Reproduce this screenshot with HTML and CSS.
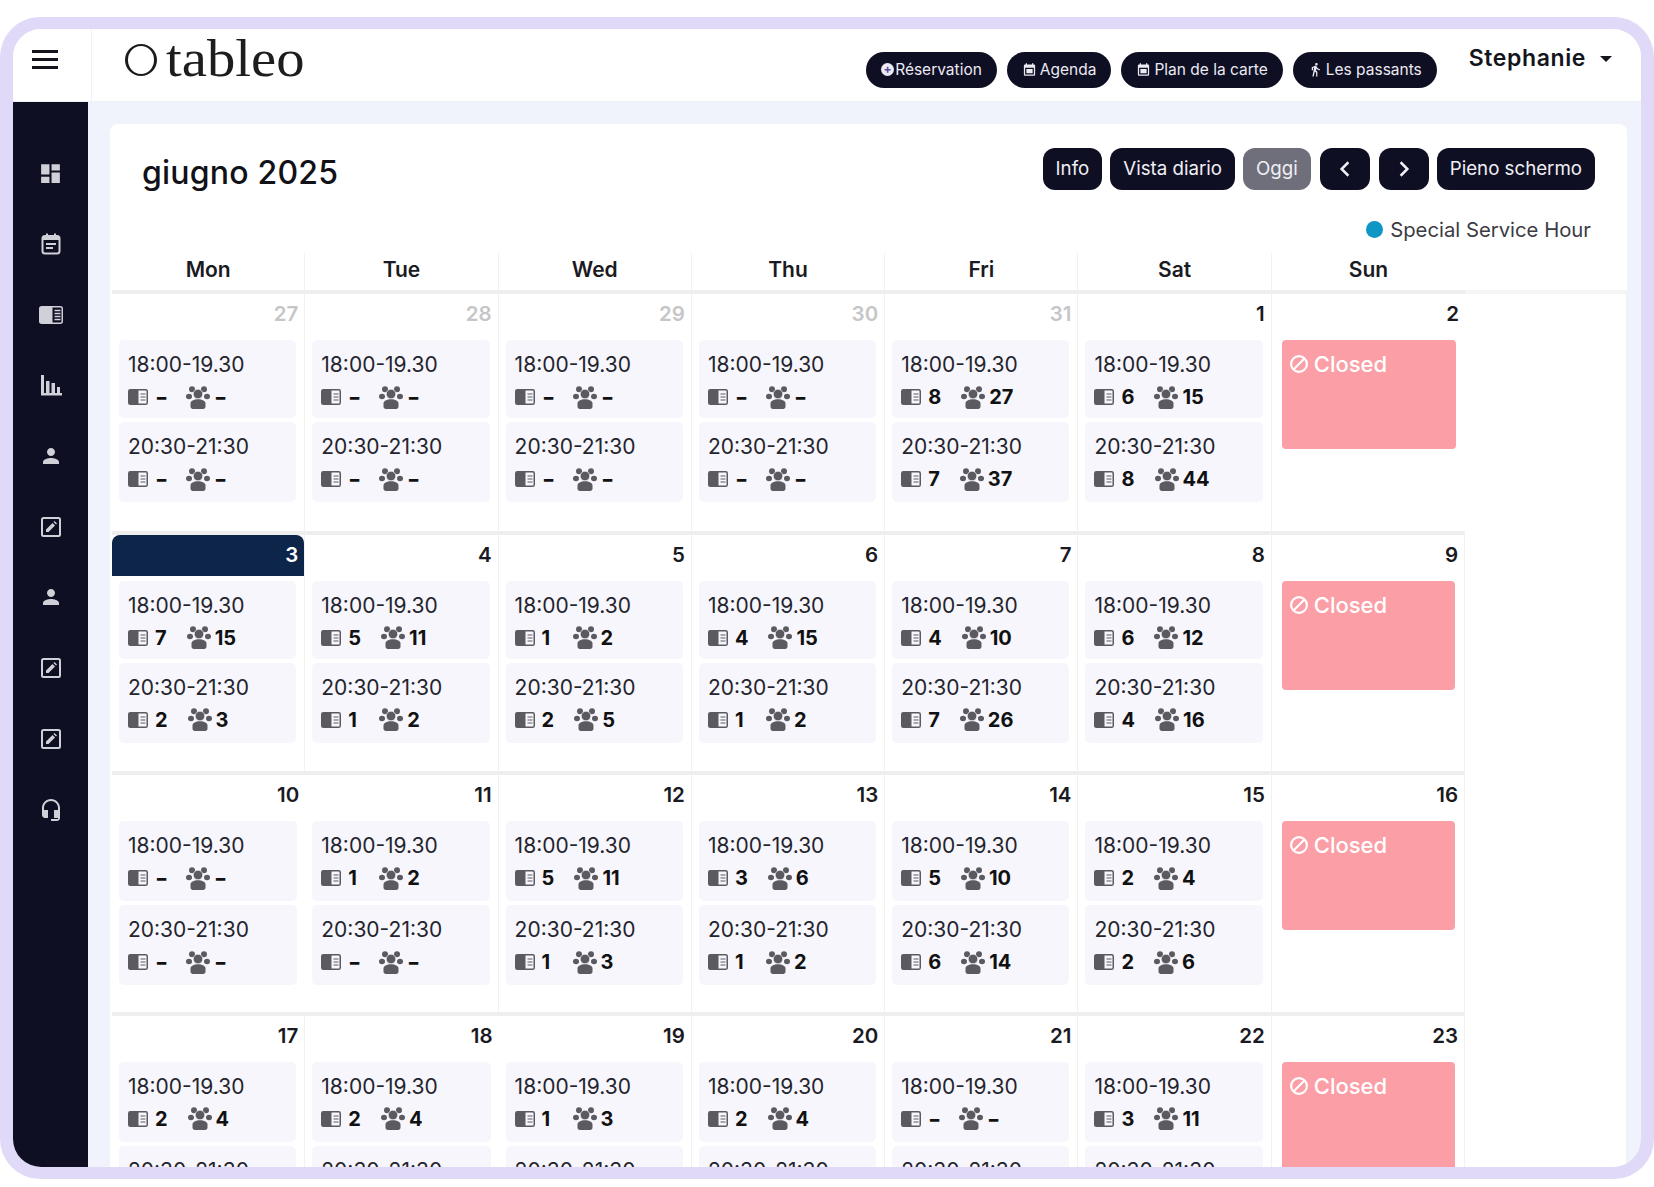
FILE: index.html
```html
<!DOCTYPE html>
<html lang="it">
<head>
<meta charset="utf-8">
<title>tableo</title>
<link rel="stylesheet" href="styles.css">
</head>
<body>
<svg class="defs" xmlns="http://www.w3.org/2000/svg">
  <symbol id="i-book" viewBox="0 0 20 16"><rect x=".75" y=".75" width="18.5" height="14.5" rx="1.6" fill="none" stroke="currentColor" stroke-width="1.5"/><path d="M1 1h9.5v14H1z" fill="currentColor"/><path d="M12.5 5h5M12.5 8h5M12.5 11h5" stroke="currentColor" stroke-width="1.2" fill="none"/></symbol>
  <symbol id="i-group" viewBox="0 0 24 23"><circle cx="6" cy="3.300" r="3" fill="currentColor"/><circle cx="18" cy="3.300" r="3" fill="currentColor"/><ellipse cx="3" cy="10.500" rx="3" ry="2.800" fill="currentColor"/><ellipse cx="21" cy="10.500" rx="3" ry="2.800" fill="currentColor"/><circle cx="12" cy="8" r="4.800" fill="currentColor" stroke="#f6f6fc" stroke-width=".7"/><path d="M4.500 20.500v-3c0-2.600 3.300-4.200 7.500-4.200s7.500 1.600 7.500 4.200v3c0 1.400-1 2.500-2.400 2.500H6.900c-1.400 0-2.400-1.100-2.400-2.500z" fill="currentColor"/></symbol>
  <symbol id="i-dash" viewBox="0 0 24 24"><path d="M3 13h8V3H3v10zm0 8h8v-6H3v6zm10 0h8V11h-8v10zm0-18v6h8V3h-8z" fill="currentColor"/></symbol>
  <symbol id="i-cal" viewBox="0 0 24 24"><rect x="3.500" y="4" width="17" height="17.500" rx="2.500" fill="none" stroke="currentColor" stroke-width="2"/><path d="M4 4h16v4H4zM7 1.500h2V5H7zM15 1.500h2V5h-2zM7 11h10v2H7zM7 15h7v2H7z" fill="currentColor"/></symbol>
  <symbol id="i-menu" viewBox="0 0 24 18"><rect x=".75" y=".75" width="22.500" height="16.500" rx="2" fill="none" stroke="currentColor" stroke-width="1.500"/><path d="M1 1h12.500v16H1z" fill="currentColor"/><path d="M15.500 4.500h6M15.500 7.500h6M15.500 10.500h6M15.500 13.500h6" stroke="currentColor" stroke-width="1.500" fill="none"/></symbol>
  <symbol id="i-bars" viewBox="0 0 24 24"><path d="M2 2h3v18h2V8h3.500v12h2V10h3.500v10h2v-6H21v6h2v2.500H2z" fill="currentColor"/></symbol>
  <symbol id="i-person" viewBox="0 0 24 24"><path d="M12 12c2.210 0 4-1.790 4-4s-1.790-4-4-4-4 1.790-4 4 1.790 4 4 4zm0 2c-2.670 0-8 1.340-8 4v2h16v-2c0-2.660-5.330-4-8-4z" fill="currentColor"/></symbol>
  <symbol id="i-edit" viewBox="0 0 24 24"><rect x="3" y="3" width="18" height="18" rx="1.500" fill="none" stroke="currentColor" stroke-width="2"/><path d="M7 17v-2.500l6.500-6.500 2.500 2.500L9.500 17zM14.500 7l1-1 2.500 2.500-1 1z" fill="currentColor"/></symbol>
  <symbol id="i-head" viewBox="0 0 24 24"><path d="M12 1c-4.970 0-9 4.030-9 9v7c0 1.660 1.340 3 3 3h3v-8H5v-2c0-3.870 3.130-7 7-7s7 3.130 7 7v2h-4v8h4v1h-7v2h6c1.660 0 3-1.340 3-3V10c0-4.970-4.030-9-9-9z" fill="currentColor"/></symbol>
  <symbol id="i-walk" viewBox="0 0 24 24"><path d="M13.500 5.500c1.100 0 2-.9 2-2s-.9-2-2-2-2 .9-2 2 .9 2 2 2zM9.800 8.900L7 23h2.100l1.800-8 2.100 2v6h2v-7.500l-2.100-2 .6-3C14.800 12 16.800 13 19 13v-2c-1.900 0-3.500-1-4.300-2.400l-1-1.600c-.4-.6-1-1-1.700-1-.3 0-.5.1-.8.1L6 8.300V13h2V9.600l1.800-.7" fill="currentColor"/></symbol>
  <symbol id="i-navcal" viewBox="0 0 24 24"><path d="M19 4h-1V2h-2v2H8V2H6v2H5c-1.100 0-2 .9-2 2v14c0 1.100.9 2 2 2h14c1.100 0 2-.9 2-2V6c0-1.100-.9-2-2-2zm0 16H5V9h14v11zM7 11h10v7H7z" fill="currentColor"/></symbol>
  <symbol id="i-ban" viewBox="0 0 24 24"><circle cx="12" cy="12" r="9.500" fill="none" stroke="currentColor" stroke-width="2.600"/><path d="M6 18L18 6" stroke="currentColor" stroke-width="2.600"/></symbol>
</svg>

<div class="frame">
<div class="screen">
  <header class="topbar">
    <div class="burger-cell"><span class="burger"><i></i><i></i><i></i></span></div>
    <div class="logo"><span class="logo-ring"></span><span class="logo-text">tableo</span></div>
    <nav class="nav">
      <a class="pill pill-res"><span class="plus">+</span>Réservation</a>
      <a class="pill"><svg class="pill-icon"><use href="#i-navcal"/></svg>Agenda</a>
      <a class="pill"><svg class="pill-icon"><use href="#i-navcal"/></svg>Plan de la carte</a>
      <a class="pill"><svg class="pill-icon"><use href="#i-walk"/></svg>Les passants</a>
    </nav>
    <div class="user">Stephanie<span class="caret"></span></div>
  </header>

  <div class="body">
    <aside class="sidebar">
      <span class="side-item"><svg class="side-icon dash"><use href="#i-dash"/></svg></span>
      <span class="side-item"><svg class="side-icon"><use href="#i-cal"/></svg></span>
      <span class="side-item"><svg class="side-icon menu"><use href="#i-menu"/></svg></span>
      <span class="side-item"><svg class="side-icon"><use href="#i-bars"/></svg></span>
      <span class="side-item"><svg class="side-icon"><use href="#i-person"/></svg></span>
      <span class="side-item"><svg class="side-icon"><use href="#i-edit"/></svg></span>
      <span class="side-item"><svg class="side-icon"><use href="#i-person"/></svg></span>
      <span class="side-item"><svg class="side-icon"><use href="#i-edit"/></svg></span>
      <span class="side-item"><svg class="side-icon"><use href="#i-edit"/></svg></span>
      <span class="side-item"><svg class="side-icon"><use href="#i-head"/></svg></span>
    </aside>

    <main class="main">
      <section class="card">
        <div class="toolbar">
          <h1 class="title">giugno 2025</h1>
          <div class="tools">
            <button class="btn">Info</button>
            <button class="btn">Vista diario</button>
            <button class="btn btn-muted">Oggi</button>
            <button class="btn btn-arrow"><svg class="chev" viewBox="0 0 12 16"><path d="M9 2L3 8l6 6" fill="none" stroke="currentColor" stroke-width="2.200"/></svg></button>
            <button class="btn btn-arrow"><svg class="chev" viewBox="0 0 12 16"><path d="M3 2l6 6-6 6" fill="none" stroke="currentColor" stroke-width="2.200"/></svg></button>
            <button class="btn">Pieno schermo</button>
          </div>
        </div>
        <div class="legend"><span class="dot"></span>Special Service Hour</div>

        <div class="week-head">
          <div class="wd">Mon</div><div class="wd">Tue</div><div class="wd">Wed</div><div class="wd">Thu</div><div class="wd">Fri</div><div class="wd">Sat</div><div class="wd">Sun</div>
        </div>

        <div class="grid">
          <div class="filler"></div>

          <div class="cell"><div class="num muted">27</div><div class="slot"><div class="time">18:00-19.30</div><div class="stats"><svg class="s-book"><use href="#i-book"/></svg><b class="nil">-</b><svg class="s-group"><use href="#i-group"/></svg><b class="nil">-</b></div></div><div class="slot"><div class="time">20:30-21:30</div><div class="stats"><svg class="s-book"><use href="#i-book"/></svg><b class="nil">-</b><svg class="s-group"><use href="#i-group"/></svg><b class="nil">-</b></div></div></div>
          <div class="cell"><div class="num muted">28</div><div class="slot"><div class="time">18:00-19.30</div><div class="stats"><svg class="s-book"><use href="#i-book"/></svg><b class="nil">-</b><svg class="s-group"><use href="#i-group"/></svg><b class="nil">-</b></div></div><div class="slot"><div class="time">20:30-21:30</div><div class="stats"><svg class="s-book"><use href="#i-book"/></svg><b class="nil">-</b><svg class="s-group"><use href="#i-group"/></svg><b class="nil">-</b></div></div></div>
          <div class="cell"><div class="num muted">29</div><div class="slot"><div class="time">18:00-19.30</div><div class="stats"><svg class="s-book"><use href="#i-book"/></svg><b class="nil">-</b><svg class="s-group"><use href="#i-group"/></svg><b class="nil">-</b></div></div><div class="slot"><div class="time">20:30-21:30</div><div class="stats"><svg class="s-book"><use href="#i-book"/></svg><b class="nil">-</b><svg class="s-group"><use href="#i-group"/></svg><b class="nil">-</b></div></div></div>
          <div class="cell"><div class="num muted">30</div><div class="slot"><div class="time">18:00-19.30</div><div class="stats"><svg class="s-book"><use href="#i-book"/></svg><b class="nil">-</b><svg class="s-group"><use href="#i-group"/></svg><b class="nil">-</b></div></div><div class="slot"><div class="time">20:30-21:30</div><div class="stats"><svg class="s-book"><use href="#i-book"/></svg><b class="nil">-</b><svg class="s-group"><use href="#i-group"/></svg><b class="nil">-</b></div></div></div>
          <div class="cell"><div class="num muted">31</div><div class="slot"><div class="time">18:00-19.30</div><div class="stats"><svg class="s-book"><use href="#i-book"/></svg><b>8</b><svg class="s-group"><use href="#i-group"/></svg><b>27</b></div></div><div class="slot"><div class="time">20:30-21:30</div><div class="stats"><svg class="s-book"><use href="#i-book"/></svg><b>7</b><svg class="s-group"><use href="#i-group"/></svg><b>37</b></div></div></div>
          <div class="cell"><div class="num">1</div><div class="slot"><div class="time">18:00-19.30</div><div class="stats"><svg class="s-book"><use href="#i-book"/></svg><b>6</b><svg class="s-group"><use href="#i-group"/></svg><b>15</b></div></div><div class="slot"><div class="time">20:30-21:30</div><div class="stats"><svg class="s-book"><use href="#i-book"/></svg><b>8</b><svg class="s-group"><use href="#i-group"/></svg><b>44</b></div></div></div>
          <div class="cell"><div class="num">2</div><div class="closed"><svg class="ban"><use href="#i-ban"/></svg>Closed</div></div>

          <div class="cell"><div class="num today">3</div><div class="slot"><div class="time">18:00-19.30</div><div class="stats"><svg class="s-book"><use href="#i-book"/></svg><b>7</b><svg class="s-group"><use href="#i-group"/></svg><b>15</b></div></div><div class="slot"><div class="time">20:30-21:30</div><div class="stats"><svg class="s-book"><use href="#i-book"/></svg><b>2</b><svg class="s-group"><use href="#i-group"/></svg><b>3</b></div></div></div>
          <div class="cell"><div class="num">4</div><div class="slot"><div class="time">18:00-19.30</div><div class="stats"><svg class="s-book"><use href="#i-book"/></svg><b>5</b><svg class="s-group"><use href="#i-group"/></svg><b>11</b></div></div><div class="slot"><div class="time">20:30-21:30</div><div class="stats"><svg class="s-book"><use href="#i-book"/></svg><b>1</b><svg class="s-group"><use href="#i-group"/></svg><b>2</b></div></div></div>
          <div class="cell"><div class="num">5</div><div class="slot"><div class="time">18:00-19.30</div><div class="stats"><svg class="s-book"><use href="#i-book"/></svg><b>1</b><svg class="s-group"><use href="#i-group"/></svg><b>2</b></div></div><div class="slot"><div class="time">20:30-21:30</div><div class="stats"><svg class="s-book"><use href="#i-book"/></svg><b>2</b><svg class="s-group"><use href="#i-group"/></svg><b>5</b></div></div></div>
          <div class="cell"><div class="num">6</div><div class="slot"><div class="time">18:00-19.30</div><div class="stats"><svg class="s-book"><use href="#i-book"/></svg><b>4</b><svg class="s-group"><use href="#i-group"/></svg><b>15</b></div></div><div class="slot"><div class="time">20:30-21:30</div><div class="stats"><svg class="s-book"><use href="#i-book"/></svg><b>1</b><svg class="s-group"><use href="#i-group"/></svg><b>2</b></div></div></div>
          <div class="cell"><div class="num">7</div><div class="slot"><div class="time">18:00-19.30</div><div class="stats"><svg class="s-book"><use href="#i-book"/></svg><b>4</b><svg class="s-group"><use href="#i-group"/></svg><b>10</b></div></div><div class="slot"><div class="time">20:30-21:30</div><div class="stats"><svg class="s-book"><use href="#i-book"/></svg><b>7</b><svg class="s-group"><use href="#i-group"/></svg><b>26</b></div></div></div>
          <div class="cell"><div class="num">8</div><div class="slot"><div class="time">18:00-19.30</div><div class="stats"><svg class="s-book"><use href="#i-book"/></svg><b>6</b><svg class="s-group"><use href="#i-group"/></svg><b>12</b></div></div><div class="slot"><div class="time">20:30-21:30</div><div class="stats"><svg class="s-book"><use href="#i-book"/></svg><b>4</b><svg class="s-group"><use href="#i-group"/></svg><b>16</b></div></div></div>
          <div class="cell"><div class="num">9</div><div class="closed"><svg class="ban"><use href="#i-ban"/></svg>Closed</div></div>

          <div class="cell"><div class="num">10</div><div class="slot"><div class="time">18:00-19.30</div><div class="stats"><svg class="s-book"><use href="#i-book"/></svg><b class="nil">-</b><svg class="s-group"><use href="#i-group"/></svg><b class="nil">-</b></div></div><div class="slot"><div class="time">20:30-21:30</div><div class="stats"><svg class="s-book"><use href="#i-book"/></svg><b class="nil">-</b><svg class="s-group"><use href="#i-group"/></svg><b class="nil">-</b></div></div></div>
          <div class="cell"><div class="num">11</div><div class="slot"><div class="time">18:00-19.30</div><div class="stats"><svg class="s-book"><use href="#i-book"/></svg><b>1</b><svg class="s-group"><use href="#i-group"/></svg><b>2</b></div></div><div class="slot"><div class="time">20:30-21:30</div><div class="stats"><svg class="s-book"><use href="#i-book"/></svg><b class="nil">-</b><svg class="s-group"><use href="#i-group"/></svg><b class="nil">-</b></div></div></div>
          <div class="cell"><div class="num">12</div><div class="slot"><div class="time">18:00-19.30</div><div class="stats"><svg class="s-book"><use href="#i-book"/></svg><b>5</b><svg class="s-group"><use href="#i-group"/></svg><b>11</b></div></div><div class="slot"><div class="time">20:30-21:30</div><div class="stats"><svg class="s-book"><use href="#i-book"/></svg><b>1</b><svg class="s-group"><use href="#i-group"/></svg><b>3</b></div></div></div>
          <div class="cell"><div class="num">13</div><div class="slot"><div class="time">18:00-19.30</div><div class="stats"><svg class="s-book"><use href="#i-book"/></svg><b>3</b><svg class="s-group"><use href="#i-group"/></svg><b>6</b></div></div><div class="slot"><div class="time">20:30-21:30</div><div class="stats"><svg class="s-book"><use href="#i-book"/></svg><b>1</b><svg class="s-group"><use href="#i-group"/></svg><b>2</b></div></div></div>
          <div class="cell"><div class="num">14</div><div class="slot"><div class="time">18:00-19.30</div><div class="stats"><svg class="s-book"><use href="#i-book"/></svg><b>5</b><svg class="s-group"><use href="#i-group"/></svg><b>10</b></div></div><div class="slot"><div class="time">20:30-21:30</div><div class="stats"><svg class="s-book"><use href="#i-book"/></svg><b>6</b><svg class="s-group"><use href="#i-group"/></svg><b>14</b></div></div></div>
          <div class="cell"><div class="num">15</div><div class="slot"><div class="time">18:00-19.30</div><div class="stats"><svg class="s-book"><use href="#i-book"/></svg><b>2</b><svg class="s-group"><use href="#i-group"/></svg><b>4</b></div></div><div class="slot"><div class="time">20:30-21:30</div><div class="stats"><svg class="s-book"><use href="#i-book"/></svg><b>2</b><svg class="s-group"><use href="#i-group"/></svg><b>6</b></div></div></div>
          <div class="cell"><div class="num">16</div><div class="closed"><svg class="ban"><use href="#i-ban"/></svg>Closed</div></div>

          <div class="cell"><div class="num">17</div><div class="slot"><div class="time">18:00-19.30</div><div class="stats"><svg class="s-book"><use href="#i-book"/></svg><b>2</b><svg class="s-group"><use href="#i-group"/></svg><b>4</b></div></div><div class="slot"><div class="time">20:30-21:30</div><div class="stats"><svg class="s-book"><use href="#i-book"/></svg><b class="nil">-</b><svg class="s-group"><use href="#i-group"/></svg><b class="nil">-</b></div></div></div>
          <div class="cell"><div class="num">18</div><div class="slot"><div class="time">18:00-19.30</div><div class="stats"><svg class="s-book"><use href="#i-book"/></svg><b>2</b><svg class="s-group"><use href="#i-group"/></svg><b>4</b></div></div><div class="slot"><div class="time">20:30-21:30</div><div class="stats"><svg class="s-book"><use href="#i-book"/></svg><b class="nil">-</b><svg class="s-group"><use href="#i-group"/></svg><b class="nil">-</b></div></div></div>
          <div class="cell"><div class="num">19</div><div class="slot"><div class="time">18:00-19.30</div><div class="stats"><svg class="s-book"><use href="#i-book"/></svg><b>1</b><svg class="s-group"><use href="#i-group"/></svg><b>3</b></div></div><div class="slot"><div class="time">20:30-21:30</div><div class="stats"><svg class="s-book"><use href="#i-book"/></svg><b class="nil">-</b><svg class="s-group"><use href="#i-group"/></svg><b class="nil">-</b></div></div></div>
          <div class="cell"><div class="num">20</div><div class="slot"><div class="time">18:00-19.30</div><div class="stats"><svg class="s-book"><use href="#i-book"/></svg><b>2</b><svg class="s-group"><use href="#i-group"/></svg><b>4</b></div></div><div class="slot"><div class="time">20:30-21:30</div><div class="stats"><svg class="s-book"><use href="#i-book"/></svg><b class="nil">-</b><svg class="s-group"><use href="#i-group"/></svg><b class="nil">-</b></div></div></div>
          <div class="cell"><div class="num">21</div><div class="slot"><div class="time">18:00-19.30</div><div class="stats"><svg class="s-book"><use href="#i-book"/></svg><b class="nil">-</b><svg class="s-group"><use href="#i-group"/></svg><b class="nil">-</b></div></div><div class="slot"><div class="time">20:30-21:30</div><div class="stats"><svg class="s-book"><use href="#i-book"/></svg><b class="nil">-</b><svg class="s-group"><use href="#i-group"/></svg><b class="nil">-</b></div></div></div>
          <div class="cell"><div class="num">22</div><div class="slot"><div class="time">18:00-19.30</div><div class="stats"><svg class="s-book"><use href="#i-book"/></svg><b>3</b><svg class="s-group"><use href="#i-group"/></svg><b>11</b></div></div><div class="slot"><div class="time">20:30-21:30</div><div class="stats"><svg class="s-book"><use href="#i-book"/></svg><b class="nil">-</b><svg class="s-group"><use href="#i-group"/></svg><b class="nil">-</b></div></div></div>
          <div class="cell"><div class="num">23</div><div class="closed"><svg class="ban"><use href="#i-ban"/></svg>Closed</div></div>
        </div>
      </section>
    </main>
  </div>
</div>
</div>
</body>
</html>
```
FILE: styles.css
```css
* { box-sizing: border-box; }
html, body { margin: 0; height: 100%; background: #fff; overflow: hidden; }
body { font-family: Inter, "Noto Sans", sans-serif; color: #14141c; }
.defs { display: none; }

.frame {
  margin-top: 17px;
  height: 1162px;
  padding: 12px 13px 12px 13px;
  background: #e0d9f7;
  border-radius: 40px;
}
.screen {
  height: 100%;
  border-radius: 28px;
  overflow: hidden;
  background: #f0f3fb;
  display: flex;
  flex-direction: column;
}

/* top bar */
.topbar {
  flex: none;
  height: 73px;
  display: flex;
  background: #fff;
  border-bottom: 1px solid #eef0f4;
  padding-right: 29px;
}
.burger-cell {
  width: 79px;
  flex: none;
  border-right: 1px solid #f1f1f4;
  padding: 21px 0 0 19px;
}
.burger { display: flex; flex-direction: column; gap: 5px; width: 26px; }
.burger i { display: block; height: 3px; background: #14141c; }
.logo { display: flex; align-items: center; padding-left: 33px; height: 60px; }
.logo-ring {
  width: 32px; height: 32px; border-radius: 50%;
  border: 2px solid #1c1c1c; border-left-width: 3px; border-right-width: 3px;
  margin-right: 9px; margin-top: 2px;
}
.logo-text {
  font-family: "Liberation Serif", serif;
  font-size: 52px;
  line-height: 60px;
  color: #1d1d1d;
  transform: scaleX(1.090);
  transform-origin: left center;
}
.nav { display: flex; gap: 10px; margin-left: auto; margin-top: 23px; align-self: flex-start; }
.pill {
  height: 36px;
  padding: 0 15px 2px 15px;
  display: flex; align-items: center;
  border-radius: 18px;
  background: #0f0f24;
  color: #eceaf3;
  font-size: 15.500px;
  white-space: nowrap;
}
.plus {
  width: 13px; height: 13px; border-radius: 50%;
  background: #eceaf3; color: #5a4aa0;
  font-size: 12px; line-height: 12px; font-weight: 700; text-align: center;
  margin-right: 1px;
}
.pill-icon { width: 15px; height: 15px; margin-right: 3px; flex: none; }
.user {
  margin-left: 32px;
  margin-top: 15px;
  align-self: flex-start;
  font-size: 23px;
  letter-spacing: .6px;
  line-height: 29px;
  font-weight: 600;
  display: flex; align-items: center;
}
.caret {
  margin-left: 14px;
  border-left: 6px solid transparent;
  border-right: 6px solid transparent;
  border-top: 6px solid #14141c;
}

.body { flex: 1; min-height: 0; display: flex; }
.sidebar {
  width: 75px;
  flex: none;
  background: #0f0f24;
  padding-top: 36px;
  display: flex; flex-direction: column;
  color: #d0d0d8;
}
.side-item { height: 70.700px; flex: none; display: flex; align-items: center; justify-content: center; }
.side-icon { width: 24px; height: 24px; }
.side-icon.dash { width: 25px; height: 25px; }
.side-icon.menu { height: 18px; }

.main { flex: 1; min-width: 0; padding: 22px 14px 0 22px; }
.card {
  height: 100%;
  overflow: hidden;
  background: #fff;
  border-radius: 8px 8px 0 0;
  padding-top: 24px;
}
.toolbar { display: flex; align-items: flex-start; justify-content: space-between; padding: 0 32px; height: 42px; }
.title { margin: 4px 0 0; font-size: 32px; letter-spacing: .2px; font-weight: 500; line-height: 42px; color: #111118; }
.tools { display: flex; gap: 8px; }
.btn {
  font-family: inherit;
  height: 42px;
  padding: 0 13px 2px;
  border: 0;
  border-radius: 12px;
  background: #0f0f24;
  color: #f0eff5;
  font-size: 18.700px;
  white-space: nowrap;
}
.btn-muted { background: #6f6f7c; }
.btn-arrow { width: 50px; padding: 0; display: flex; align-items: center; justify-content: center; margin-left: 1px; }
.chev { width: 14px; height: 18px; }
.legend {
  display: flex; align-items: center; justify-content: flex-end;
  padding-right: 36px;
  margin-top: 27px;
  height: 24px;
  font-size: 20.300px;
  color: #3b3b44;
}
.dot { width: 17px; height: 17px; border-radius: 50%; background: #0e96c4; margin-right: 7px; }

.week-head { display: grid; grid-template-columns: repeat(7, 193.300px); margin: 12px 0 0 2px; height: 37px; }
.wd {
  border-right: 1px solid #f1f1f3;
  text-align: center;
  font-size: 21px;
  font-weight: 600;
  line-height: 34px;
  color: #1a1a22;
}
.wd:last-child { border-right: 0; }

.grid {
  margin-left: 2px;
  display: grid;
  grid-template-columns: repeat(7, 193.300px) 1fr;
  grid-auto-rows: 240.600px;
}
.filler { grid-column: 8; grid-row: 1 / span 4; border-top: 4px solid #f5f5f6; border-right: 1px solid #f1f1f3; }
.cell { border-top: 4px solid #eeeeef; border-right: 1px solid #f1f1f3; }
.cell:nth-child(8n) { border-right: 0; }
.num {
  height: 41px;
  padding: 6px 6px 0 0;
  margin-bottom: 5px;
  text-align: right;
  font-size: 20.500px;
  font-weight: 600;
  line-height: 28px;
  color: #1a1a22;
}
.num.muted { color: #c6c6c8; }
.num.today { background: #0c2549; color: #fff; border-radius: 8px 8px 0 0; }
.slot {
  margin: 0 8px 4px 7px;
  height: 78px;
  padding: 11px 9px 0 9px;
  background: #f6f6fc;
  border-radius: 5px;
}
.slot:last-child { height: 80px; }
.cell:nth-child(n+16) .slot { height: 80px; }
.time { font-size: 21px; line-height: 28px; color: #24242c; }
.stats { display: flex; align-items: center; height: 24px; margin-top: 6px; }
.stats b { font-size: 20px; font-weight: 700; min-width: 11px; color: #111; }
.stats b.nil { font-weight: 800; transform: scaleX(1.400); transform-origin: left center; }
.s-book { width: 20px; height: 16px; color: #5a5a60; margin-right: 7px; flex: none; }
.s-group { width: 24px; height: 23px; color: #5a5a60; margin-left: 20px; margin-right: 4px; flex: none; }
.closed {
  margin: 1px 9px 0 10px;
  height: 109px;
  padding: 10px 0 0 7px;
  background: #fb9ea6;
  border-radius: 4px;
  color: #fff;
  font-size: 22px;
  font-weight: 500;
  line-height: 28px;
  display: flex; align-items: flex-start;
}
.ban { width: 20px; height: 20px; margin: 4px 5px 0 0; flex: none; }
```
